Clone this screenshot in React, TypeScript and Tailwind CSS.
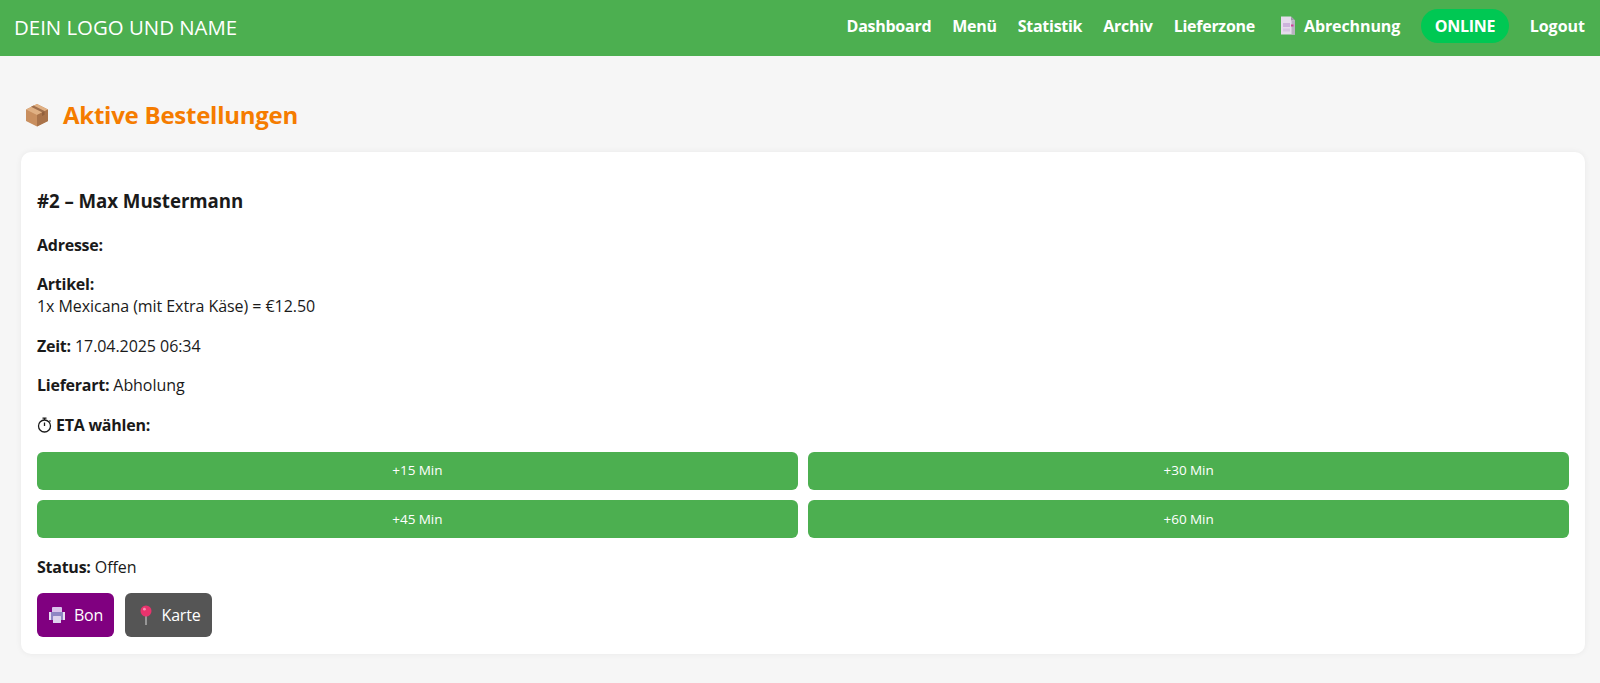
import React from 'react';

const BoxIcon = () => (
  <svg width="26" height="26" viewBox="0 0 26 26" className="shrink-0">
    <path d="M13 2 L24 7.5 V19 L13 24.5 L2 19 V7.5 Z" fill="#c98f5f" />
    <path d="M13 2 L24 7.5 L13 13 L2 7.5 Z" fill="#e0b083" />
    <path d="M13 13 L24 7.5 V19 L13 24.5 Z" fill="#a9734a" />
    <path d="M7 4.8 L18 10.3 V14 L20.5 12.7 V9 L9.5 3.5 Z" fill="#8a5a3a" opacity="0.75" />
  </svg>
);

const BillIcon = () => (
  <svg width="16" height="19" viewBox="0 0 16 19" className="shrink-0">
    <path d="M1 0.5 H11 L15 4.5 V18.5 H1 Z" fill="#e6dcec" />
    <path d="M11 0.5 L15 4.5 H11 Z" fill="#9d97a8" />
    <rect x="11.5" y="5" width="3.5" height="13.5" fill="#b9b2c2" />
    <rect x="3" y="7" width="7" height="4" fill="#cdb4dc" />
    <rect x="3" y="12.5" width="7" height="3" fill="#d8c6e4" />
    <rect x="11" y="8.5" width="2.5" height="2" fill="#d0409a" />
  </svg>
);

const PrinterIcon = () => (
  <svg width="18" height="18" viewBox="0 0 18 18" className="shrink-0">
    <rect x="4" y="1" width="10" height="6" rx="1" fill="#d9c3ec" />
    <rect x="1" y="6" width="16" height="8" rx="1.5" fill="#8f86c4" />
    <rect x="1" y="6" width="2" height="8" fill="#e8e0f2" />
    <rect x="15" y="6" width="2" height="8" fill="#e8e0f2" />
    <rect x="5" y="10" width="8" height="7" rx="0.5" fill="#ded3ee" />
  </svg>
);

const PinIcon = () => (
  <svg width="18" height="20" viewBox="0 0 18 20" className="shrink-0">
    <rect x="8.2" y="8" width="1.6" height="12" fill="#a8a8a8" />
    <circle cx="9" cy="6" r="5.5" fill="#e8336d" />
    <circle cx="7.4" cy="4.2" r="1.4" fill="#f78fb0" />
  </svg>
);

const TimerIcon = () => (
  <svg width="15" height="16" viewBox="0 0 15 16" fill="none" stroke="#1a1a1a" strokeWidth="1.3" className="shrink-0">
    <circle cx="7.5" cy="9" r="6" />
    <path d="M5.5 1.2 H9.5 M7.5 1.2 V3 M7.5 9 V5.5 M12.5 3.5 L13.5 4.5" />
  </svg>
);

const navItems = ['Dashboard', 'Menü', 'Statistik', 'Archiv', 'Lieferzone'];
const etaOptions = ['+15 Min', '+30 Min', '+45 Min', '+60 Min'];

export default function App() {
  return (
    <div className="min-h-[683px] bg-[#f6f6f6] text-[16px] text-[#1a1a1a] font-['Open_Sans','Noto_Sans',sans-serif]">
      <header className="flex h-[56px] items-center justify-between bg-[#4caf50] pl-[14px] pr-[15px] text-white">
        <div className="pb-[2px] text-[20.4px]">DEIN LOGO UND NAME</div>
        <nav className="flex items-center gap-[21px] pb-[5px] text-[16px] font-bold tracking-[-0.27px]">
          {navItems.map((item) => (
            <a key={item}>{item}</a>
          ))}
          <a className="ml-[4px] flex items-center gap-[8px] tracking-[-0.1px]">
            <BillIcon />
            Abrechnung
          </a>
          <span className="rounded-[17px] bg-[#00c853] px-[13.5px] py-[5px]">ONLINE</span>
          <a className="tracking-normal">Logout</a>
        </nav>
      </header>

      <main className="pt-[43px] pr-[15px] pb-[30px] pl-[21px]">
        <h2 className="mb-[21px] flex items-center gap-[13px] pl-[3px] text-[24px] leading-[32px] font-bold tracking-[-0.25px] text-[#f57c00]">
          <BoxIcon />
          Aktive Bestellungen
        </h2>

        <section className="rounded-[10px] bg-white px-[16px] pt-[16px] pb-[17px] tracking-[-0.06px] shadow-[0_0_6px_rgba(0,0,0,0.06)]">
          <h3 className="mt-[21px] mb-[21px] text-[18.7px] leading-[24px] font-bold">
            #2 – Max Mustermann
          </h3>
          <p className="mb-[17px] leading-[22px]">
            <strong className="tracking-[-0.25px]">Adresse:</strong>
          </p>
          <p className="mb-[18px] leading-[22px]">
            <strong className="tracking-[-0.25px]">Artikel:</strong>
            <br />
            1x Mexicana (mit Extra Käse) = €12.50
          </p>
          <p className="mb-[17px] leading-[22px]">
            <strong className="tracking-[-0.25px]">Zeit:</strong> 17.04.2025 06:34
          </p>
          <p className="mb-[18px] leading-[22px]">
            <strong className="tracking-[-0.25px]">Lieferart:</strong> Abholung
          </p>
          <p className="mb-[15.5px] flex items-center gap-[4px] leading-[22px]">
            <TimerIcon />
            <strong className="tracking-[-0.25px]">ETA wählen:</strong>
          </p>

          <div className="grid grid-cols-2 gap-[10.5px]">
            {etaOptions.map((eta) => (
              <button key={eta} className="h-[38px] rounded-[6px] bg-[#4caf50] text-[13.5px] text-white">
                {eta}
              </button>
            ))}
          </div>

          <p className="mt-[18px] mb-[15px] leading-[22px]">
            <strong className="tracking-[-0.25px]">Status:</strong> Offen
          </p>

          <div className="flex gap-[11px]">
            <button className="flex h-[44px] w-[77px] items-center justify-center gap-[8px] rounded-[6px] bg-[#800080] text-[16px] tracking-[-0.3px] text-white">
              <PrinterIcon />
              Bon
            </button>
            <button className="flex h-[44px] w-[87px] items-center justify-center gap-[7px] rounded-[6px] bg-[#555555] text-[16px] tracking-[-0.2px] text-white">
              <PinIcon />
              Karte
            </button>
          </div>
        </section>
      </main>
    </div>
  );
}
